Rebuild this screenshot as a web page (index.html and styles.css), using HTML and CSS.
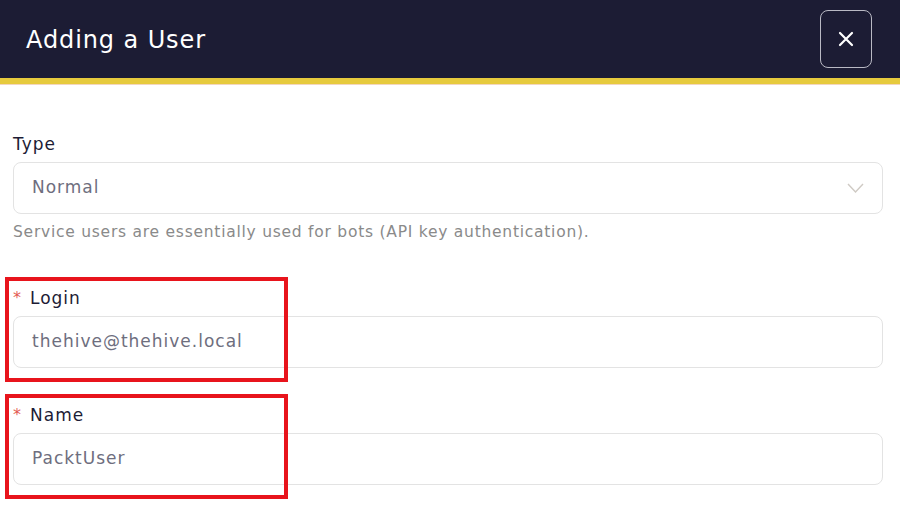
FILE: index.html
```html
<!DOCTYPE html>
<html lang="en">
<head>
<meta charset="utf-8">
<title>Adding a User</title>
<link rel="stylesheet" href="styles.css">
</head>
<body>
<header class="modal-header">
  <h1 class="modal-title">Adding a User</h1>
  <button class="close-btn" aria-label="Close">
    <svg width="16" height="16" viewBox="0 0 16 16"><path d="M2 2 L14 14 M14 2 L2 14" stroke="#ffffff" stroke-width="2.2" stroke-linecap="round"/></svg>
  </button>
</header>
<main class="modal-body">
  <div class="field field-type">
    <div class="label">Type</div>
    <div class="control select">
      <span class="value">Normal</span>
      <svg class="chevron" width="17" height="10" viewBox="0 0 17 10"><path d="M1 1 L8.5 9 L16 1" fill="none" stroke="#cfcac4" stroke-width="1.4"/></svg>
    </div>
    <div class="help">Service users are essentially used for bots (API key authentication).</div>
  </div>
  <div class="field field-login">
    <div class="label"><span class="req">*</span>Login</div>
    <div class="control"><span class="value">thehive@thehive.local</span></div>
    <div class="annot"></div>
  </div>
  <div class="field field-name">
    <div class="label"><span class="req">*</span>Name</div>
    <div class="control"><span class="value">PacktUser</span></div>
    <div class="annot"></div>
  </div>
</main>
</body>
</html>
```
FILE: styles.css
```css
* { box-sizing: border-box; }
html, body { margin: 0; padding: 0; background: #ffffff; }
body {
  font-family: "DejaVu Sans", "Noto Sans", sans-serif;
  width: 900px;
  height: 514px;
  overflow: hidden;
}
.modal-header {
  height: 84px;
  background: #1c1c34;
  border-bottom: 6px solid #e6ca3d;
  box-shadow: 0 1px 0 #f3d6bd;
  display: flex;
  align-items: center;
  justify-content: space-between;
  padding: 2px 28px 0 26px;
}
.modal-title {
  margin: 0;
  color: #ffffff;
  font-weight: 400;
  font-size: 24px;
  letter-spacing: 0.9px;
}
.close-btn {
  width: 52px;
  height: 58px;
  border: 1px solid #b9b9c4;
  border-radius: 8px;
  background: transparent;
  display: flex;
  align-items: center;
  justify-content: center;
  padding: 0;
  margin-top: -2px;
}
.modal-body {
  padding: 50px 17px 0 13px;
}
.field { position: relative; }
.field-login { margin-top: 46px; }
.field-name { margin-top: 37px; }
.label {
  font-size: 17px;
  line-height: 20px;
  letter-spacing: 1px;
  color: #1d1c35;
  margin-bottom: 8px;
  display: flex;
  align-items: center;
}
.req {
  color: #e35a52;
  font-size: 16px;
  margin-right: 9px;
  letter-spacing: 0;
}
.control {
  height: 52px;
  border: 1px solid #e3e3e3;
  border-radius: 8px;
  display: flex;
  align-items: center;
  justify-content: space-between;
  padding: 0 18px;
}
.value {
  font-size: 17px;
  letter-spacing: 1px;
  color: #6e6e7e;
  margin-top: -2px;
}
.chevron { margin-right: 0; }
.help {
  margin-top: 8px;
  font-size: 15.5px;
  line-height: 20px;
  letter-spacing: 0.75px;
  color: #8a8a8a;
}
.annot {
  position: absolute;
  left: -8px;
  top: -11px;
  width: 283px;
  height: 105px;
  border: 4px solid #e8141c;
  pointer-events: none;
}
```
